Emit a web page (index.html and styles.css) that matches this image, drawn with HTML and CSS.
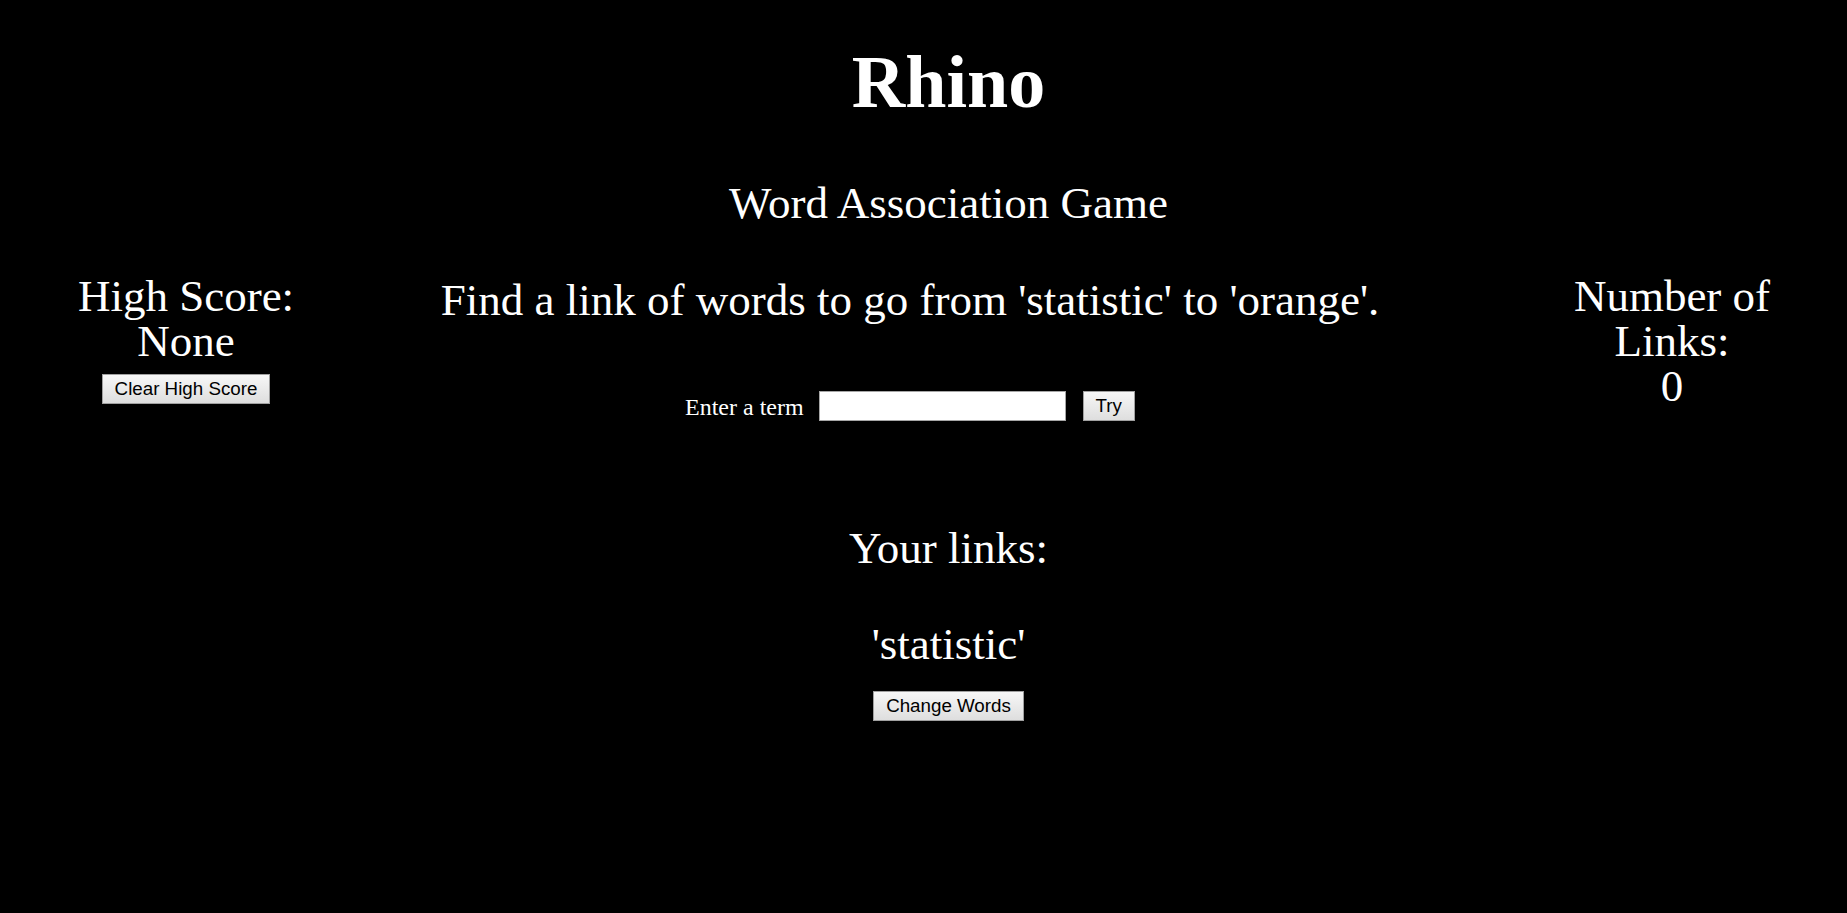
FILE: index.html
```html
<!DOCTYPE html>
<html lang="en">
<head>
<meta charset="utf-8">
<title>Rhino</title>
<link rel="stylesheet" href="styles.css">
</head>
<body>
<div class="page">
  <header class="header">
    <h1 class="title">Rhino</h1>
    <h2 class="subtitle">Word Association Game</h2>
  </header>
  <section class="game">
    <div class="side side-left">
      <div class="big-line">High Score:</div>
      <div class="big-line">None</div>
      <button class="btn btn-clear" type="button">Clear High Score</button>
    </div>
    <div class="center">
      <p class="prompt">Find a link of words to go from 'statistic' to 'orange'.</p>
      <form class="term-row">
        <label class="term-label" for="term">Enter a term</label>
        <input class="term-input" id="term" type="text">
        <button class="btn" type="button">Try</button>
      </form>
    </div>
    <div class="side side-right">
      <div class="big-line">Number of Links:</div>
      <div class="big-line">0</div>
    </div>
  </section>
  <section class="links">
    <div class="big-line">Your links:</div>
    <div class="big-line link-word">'statistic'</div>
    <button class="btn btn-change" type="button">Change Words</button>
  </section>
</div>
</body>
</html>
```

FILE: styles.css
```css
html, body {
  margin: 0;
  padding: 0;
  background: #000;
}

body {
  color: #fff;
  font-family: "Liberation Serif", "Times New Roman", serif;
  height: 913px;
  overflow: hidden;
}

.btn {
  box-sizing: border-box;
  height: 30px;
  padding: 0 12px;
  margin: 0;
  border: 1px solid #a0a0a0;
  border-radius: 0;
  background: linear-gradient(#f7f7f7, #dedede);
  color: #000;
  font-family: "Liberation Sans", Arial, sans-serif;
  font-size: 18.75px;
  line-height: 28px;
}

.page {
  padding-top: 45px;
}

.header {
  padding-left: 50px;
  text-align: center;
}

.title {
  margin: 0;
  font-size: 74px;
  line-height: 74px;
  font-weight: bold;
}

.subtitle {
  margin: 62px 0 0;
  font-size: 45px;
  line-height: 45px;
  font-weight: normal;
}

.big-line {
  font-size: 45px;
  line-height: 45px;
}

.game {
  margin-top: 48px;
  display: grid;
  grid-template-columns: 252px 1196px 289px;
  column-gap: 0;
  padding-left: 60px;
  align-items: start;
}

.side {
  text-align: center;
  display: flex;
  flex-direction: column;
  align-items: center;
}

.side-right {
  margin-left: 39px;
}

.btn-clear {
  margin-top: 10px;
}

.center {
  text-align: center;
  padding-top: 4px;
}

.prompt {
  margin: 0;
  font-size: 45px;
  line-height: 45px;
}

.term-row {
  margin: 67px 0 0;
  display: flex;
  justify-content: center;
  align-items: center;
  gap: 0;
}

.term-label {
  font-size: 24px;
  line-height: 30px;
  margin-right: 15px;
  padding-top: 2px;
}

.term-input {
  box-sizing: border-box;
  width: 247px;
  height: 30px;
  margin: 0 17px 0 0;
  padding: 0 4px;
  border: 1px solid #a6a6a6;
  background: #fff;
  font-family: "Liberation Sans", Arial, sans-serif;
  font-size: 18px;
}

.links {
  margin-top: 104px;
  padding-left: 50px;
  text-align: center;
}

.link-word {
  margin-top: 51px;
}

.btn-change {
  margin-top: 24px;
}
```
